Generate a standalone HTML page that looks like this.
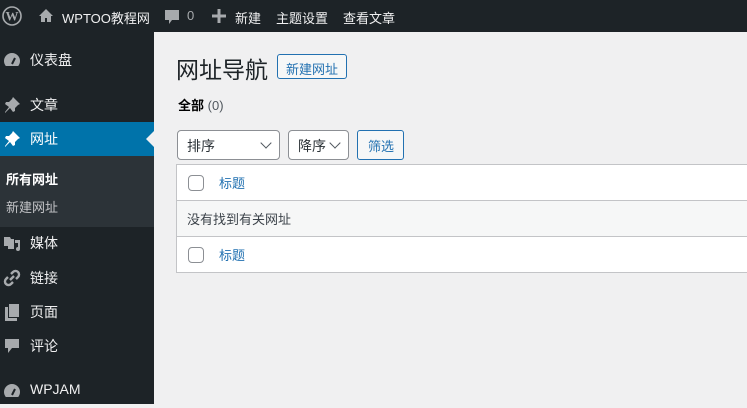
<!DOCTYPE html><html><head><meta charset="utf-8"><style>
*{box-sizing:border-box;margin:0;padding:0}
body{width:747px;height:404px;overflow:hidden;background:#f0f0f1;font-family:"Liberation Sans","Noto Sans CJK SC",sans-serif;font-size:13px;color:#3c434a;position:relative}
.top{position:absolute;left:0;top:0;width:747px;height:32px;background:#1d2327;color:#f0f0f1;font-size:13px}
.top span{position:absolute;top:8px}
.side{position:absolute;left:0;top:32px;width:154px;height:372px;background:#1d2327}
.it{position:absolute;left:0;width:154px;height:34px;color:#f0f0f1;font-size:14px}
.it .t{position:absolute;left:30px;top:7px}
.it svg{position:absolute;left:3px;top:8px}
.sub{position:absolute;left:0;top:124px;width:154px;height:71px;background:#2c3338}
.sub div{position:absolute;left:6px;font-size:13px}
.ab{position:absolute}
.sel{position:absolute;top:130px;height:30px;border:1px solid #8c8f94;border-radius:4px;background:#fff;font-size:14px;color:#2c3338;padding:5px 0 0 9px}
.sel:after{content:"";position:absolute;right:9px;top:8px;width:7px;height:7px;border-right:1.6px solid #50575e;border-bottom:1.6px solid #50575e;transform:rotate(45deg)}
.tbl{position:absolute;left:176px;top:164px;width:580px;height:109px;border:1px solid #c3c4c7;background:#fff}
.row{position:absolute;left:0;width:100%;height:36px}
.cb{position:absolute;left:11px;top:10px;width:16px;height:16px;border:1px solid #8c8f94;border-radius:4px;background:#fff}
.lk{position:absolute;left:42px;top:8px;color:#2271b1;font-size:13px}
</style></head><body>
<div class="top">
<svg class="ab" style="left:2px;top:6px" width="20" height="20" viewBox="0 0 20 20"><circle cx="10" cy="10" r="9" fill="none" stroke="#a7aaad" stroke-width="1.6"/><text x="10" y="14.5" text-anchor="middle" font-family="Liberation Serif" font-weight="bold" font-size="13" fill="#a7aaad">W</text></svg>
<svg class="ab" style="left:38px;top:8px" width="16" height="16" viewBox="0 0 16 16"><path d="M8 1L1 8h2v6h4v-4h2v4h4V8h2z" fill="#a7aaad"/></svg>
<span style="left:62px">WPTOO教程网</span>
<svg class="ab" style="left:164px;top:9px" width="16" height="16" viewBox="0 0 16 16"><path d="M1 1h14v10H8l-3 4v-4H1z" fill="#a7aaad"/></svg>
<span style="left:187px;color:#a7aaad">0</span>
<svg class="ab" style="left:212px;top:9px" width="14" height="14" viewBox="0 0 14 14"><path d="M5.5 0h3v5.5H14v3H8.5V14h-3V8.5H0v-3h5.5z" fill="#a7aaad"/></svg>
<span style="left:235px">新建</span><span style="left:276px">主题设置</span><span style="left:343px">查看文章</span>
</div>
<div class="side">
<div class="it" style="top:11px"><svg width="18" height="18" viewBox="0 0 18 18"><path d="M9 2a8 8 0 0 0-8 8c0 2 .7 3.6 1.8 5h12.4A8 8 0 0 0 17 10a8 8 0 0 0-8-8z" fill="#a7aaad"/><path d="M9 13l3-6" stroke="#1d2327" stroke-width="2"/></svg><div class="t">仪表盘</div></div>
<div class="it" style="top:56px"><svg width="18" height="18" viewBox="0 0 18 18"><path d="M10 1l7 7-2 1-3 3 0 3-2 1-3-4-5 5 0-1 4-5-4-3 1-2 3 0 3-3z" fill="#a7aaad"/></svg><div class="t">文章</div></div>
<div class="it" style="top:90px;background:#0073aa;color:#fff"><svg width="18" height="18" viewBox="0 0 18 18"><path d="M10 1l7 7-2 1-3 3 0 3-2 1-3-4-5 5 0-1 4-5-4-3 1-2 3 0 3-3z" fill="#fff"/></svg><div class="t">网址</div>
<div class="ab" style="right:0;top:9px;width:0;height:0;border:8px solid transparent;border-right-color:#f0f0f1"></div></div>
<div class="sub"><div style="top:13px;color:#fff;font-weight:bold">所有网址</div><div style="top:41px;color:#c3c4c7">新建网址</div></div>
<div class="it" style="top:194px"><svg width="18" height="18" viewBox="0 0 18 18"><path d="M1 3h6l1 2h3v10H5v-3H1z M12 6h5v9a2 2 0 1 1-2-2V9h-3z" fill="#a7aaad"/></svg><div class="t">媒体</div></div>
<div class="it" style="top:229px"><svg width="18" height="18" viewBox="0 0 18 18"><path d="M7 11l4-4M8 5l2-2a3 3 0 0 1 5 5l-2 2M10 13l-2 2a3 3 0 0 1-5-5l2-2" stroke="#a7aaad" stroke-width="2.4" fill="none"/></svg><div class="t">链接</div></div>
<div class="it" style="top:263px"><svg width="18" height="18" viewBox="0 0 18 18"><path d="M6 1h10v13H6z" fill="#a7aaad"/><path d="M2 4h3v11h9v3H2z" fill="#a7aaad"/></svg><div class="t">页面</div></div>
<div class="it" style="top:297px"><svg width="18" height="18" viewBox="0 0 18 18"><path d="M2 2h14v9H9l-4 5v-5H2z" fill="#a7aaad"/></svg><div class="t">评论</div></div>
<div class="it" style="top:342px"><svg width="18" height="18" viewBox="0 0 18 18"><path d="M9 2a8 8 0 0 0-8 8c0 2 .7 3.6 1.8 5h12.4A8 8 0 0 0 17 10a8 8 0 0 0-8-8z" fill="#a7aaad"/><path d="M9 13l3-6" stroke="#1d2327" stroke-width="2"/></svg><div class="t">WPJAM</div></div>
</div>
<div class="ab" style="left:176px;top:51px;font-size:23px;color:#1d2327">网址导航</div>
<div class="ab" style="left:277px;top:54px;width:70px;height:25px;border:1px solid #2271b1;border-radius:3px;background:#f6f7f7;color:#2271b1;font-size:13px;padding:4px 0 0 8px">新建网址</div>
<div class="ab" style="left:178px;top:95px;font-size:13px"><b style="color:#000">全部</b> <span style="color:#50575e">(0)</span></div>
<div class="sel" style="left:177px;width:103px">排序</div>
<div class="sel" style="left:288px;width:61px">降序</div>
<div class="ab" style="left:357px;top:130px;width:47px;height:30px;border:1px solid #2271b1;border-radius:3px;background:#f6f7f7;color:#2271b1;padding:5px 0 0 10px">筛选</div>
<div class="tbl">
<div class="row" style="top:0;border-bottom:1px solid #c3c4c7"><div class="cb"></div><div class="lk">标题</div></div>
<div class="row" style="top:36px;background:#f6f7f7;border-bottom:1px solid #c3c4c7"><div class="ab" style="left:10px;top:8px">没有找到有关网址</div></div>
<div class="row" style="top:72px"><div class="cb"></div><div class="lk">标题</div></div>
</div>
</body></html>
